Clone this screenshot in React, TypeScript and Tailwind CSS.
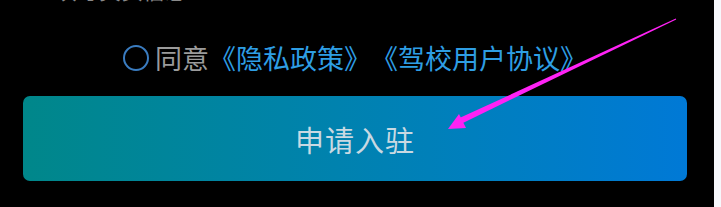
import React from 'react';

const cjk = { fontFamily: '"Noto Sans CJK SC", "Noto Sans", sans-serif' };

export default function App() {
  return (
    <div className="flex h-[207px] w-[721px] overflow-hidden bg-black" style={cjk}>
      <div className="relative flex w-[714px] flex-col">
        {/* cut-off line above */}
        <div className="-mt-[24px] h-[26px] pl-[55px] text-[22px] leading-[26px] text-[#8a8a8a]">
          填写真实信息
        </div>

        {/* agreement */}
        <div className="mt-[41px] flex h-[30px] items-center pl-[123px]">
          <span className="h-[26px] w-[26px] rounded-full border-[2px] border-[#3a7cc0]" />
          <span className="ml-[6px] text-[27px] leading-[30px] text-[#9b9b9b]">同意</span>
          <span className="text-[27px] leading-[30px] text-[#2e9ee4]">《隐私政策》</span>
          <span className="text-[27px] leading-[30px] text-[#2e9ee4]">《驾校用户协议》</span>
        </div>

        {/* submit button */}
        <div className="mx-[23px] mt-[23px] flex h-[85px] w-[664px] items-center justify-center rounded-[7px] bg-gradient-to-r from-[#00878a] to-[#0079d6]">
          <span className="text-[29px] leading-[34px] tracking-[1px] text-[#c9d9e2]">申请入驻</span>
        </div>

        {/* annotation arrow */}
        <svg className="pointer-events-none absolute left-0 top-0" width="714" height="207">
          <polygon points="456.7,119.3 459.3,124.7 676.2,19.4 675.8,18.6" fill="#ff22f5" />
          <polygon points="448,129 459,114 466,128" fill="#ff22f5" />
        </svg>
      </div>
      <div className="h-full w-[7px] bg-[#f7f8fc]" />
    </div>
  );
}
